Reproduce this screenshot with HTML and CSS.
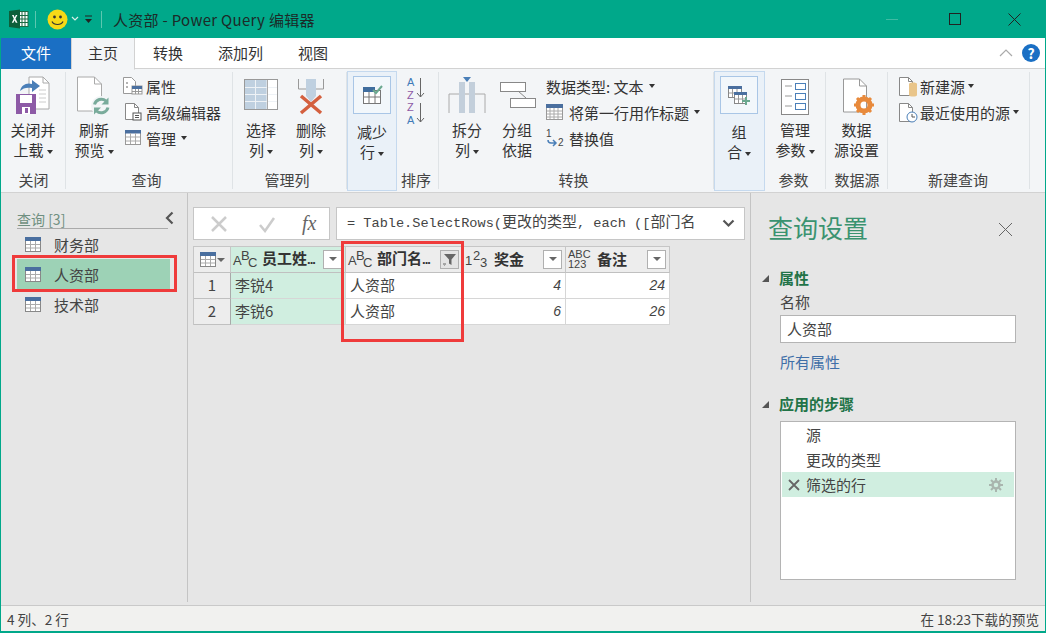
FILE: index.html
```html
<!DOCTYPE html>
<html lang="zh-CN">
  <head>
    <meta charset="UTF-8" />
    <title>人资部 - Power Query 编辑器</title>
    <link rel="stylesheet" href="styles.css">
  </head>
  <body>
    <div class="window">
      <header class="titlebar">
        <svg class="tb-excel" width="20" height="20" viewBox="0 0 20 20">
          <rect x="9" y="2.5" width="10" height="15" fill="#fff" stroke="#1d6b45"/>
          <path d="M13 3v14M16 3v14M10 6.5h9M10 10h9M10 13.5h9" stroke="#1d6b45" fill="none"/>
          <path d="M0 2l11-1.5v19L0 18z" fill="#0d5f3a"/>
          <path d="M3 6l1.7 0 1 2.4 1.1-2.4h1.6l-1.9 3.8 2 4H6.8l-1.2-2.6-1.2 2.6H2.8l2-4z" fill="#fff"/>
        </svg>
        <span class="tb-sep"></span>
        <svg class="tb-smile" width="21" height="21" viewBox="0 0 21 21">
          <circle cx="10.5" cy="10.5" r="10" fill="#f7d917"/>
          <circle cx="7.5" cy="8" r="1.4" fill="#333"/>
          <circle cx="13.5" cy="8" r="1.4" fill="#333"/>
          <path d="M5 12.5c2 4 9 4 11 0" fill="none" stroke="#333" stroke-width="1.2"/>
        </svg>
        <svg class="tb-small" width="8" height="6" viewBox="0 0 8 6"><path d="M1 1l3 3 3-3" fill="none" stroke="#d8efe8" stroke-width="1.2"/></svg>
        <svg class="tb-qat" width="9" height="9" viewBox="0 0 9 9"><path d="M1 1h7" stroke="#222"/><path d="M1 4h7L4.500 8z" fill="#222"/></svg>
        <span class="tb-sep tb-sep-last"></span>
        <span class="tb-title">人资部 - Power Query 编辑器</span>
        <div class="win-btns">
          <span class="win-min"></span>
          <span class="win-max"></span>
          <svg width="13" height="13" viewBox="0 0 13 13"><path d="M.5.5l12 12M12.500.5l-12 12" stroke="#222" fill="none"/></svg>
        </div>
      </header>

      <nav class="tabs">
        <span class="tab tab-file">文件</span>
        <span class="tab tab-home">主页</span>
        <span class="tab tab-convert">转换</span>
        <span class="tab tab-addcol">添加列</span>
        <span class="tab tab-view">视图</span>
        <div class="tabs-right">
          <svg width="14" height="8" viewBox="0 0 14 8"><path d="M1 7l6-6 6 6" fill="none" stroke="#aaa" stroke-width="1.2"/></svg>
          <span class="help">?</span>
        </div>
      </nav>

      <section class="ribbon">
        <div class="group g-close">
          <div class="group-body">
            <div class="big">
              <svg width="36" height="40" viewBox="0 0 36 40">
                <path d="M14 1h14l6 6v26H14z" fill="#fff" stroke="#aaa"/>
                <path d="M28 1v6h6" fill="none" stroke="#aaa"/>
                <path d="M24 14h7M24 18h7M24 22h7M24 26h7" stroke="#ccc"/>
                <path d="M5 15c1-6 7-9 12-7V4l8 6-8 6v-4c-5-1-9 0-12 3z" fill="#4a7fb8"/>
                <path d="M1 18h20v20H1z" fill="#8d5aa6"/>
                <rect x="5" y="19" width="12" height="8" fill="#fff"/>
                <rect x="7" y="31" width="8" height="7" fill="#fff"/>
                <rect x="10" y="32" width="3" height="5" fill="#8d5aa6"/>
              </svg>
              <span class="big-text">关闭并<br>上载<i class="caret"></i></span>
            </div>
          </div>
          <div class="group-label">关闭</div>
        </div>

        <div class="group g-query">
          <div class="group-body">
            <div class="big">
              <svg width="36" height="40" viewBox="0 0 36 40">
                <path d="M1.500 1h17l7 7v27h-24z" fill="#fff" stroke="#aaa"/>
                <path d="M18.500 1v7h7" fill="none" stroke="#aaa"/>
                <circle cx="25" cy="30" r="10" fill="#f3f5f7"/>
                <path d="M18.500 28.500a7 7 0 0 1 11.500-3.500" fill="none" stroke="#79ab9b" stroke-width="3"/>
                <path d="M32.500 21.500v7h-7z" fill="#79ab9b"/>
                <path d="M32 31.500a7 7 0 0 1-11.500 3.500" fill="none" stroke="#79ab9b" stroke-width="3"/>
                <path d="M18 38.500v-7h7z" fill="#79ab9b"/>
              </svg>
              <span class="big-text">刷新<br>预览<i class="caret"></i></span>
            </div>
            <div class="small-col">
              <div class="small">
                <svg width="20" height="18" viewBox="0 0 20 18">
                  <path d="M.5.500h8l4 4v12H.5z" fill="#fff" stroke="#999"/>
                  <path d="M3 6h2M3 10h2" stroke="#666"/>
                  <rect x="9" y="9" width="10" height="8" fill="#fff" stroke="#999"/>
                  <rect x="9" y="9" width="10" height="3" fill="#4a6f9f"/>
                  <path d="M12.500 12v5M15.500 12v5M9 14.500h10" stroke="#999"/>
                </svg>
                <span>属性</span>
              </div>
              <div class="small">
                <svg width="20" height="18" viewBox="0 0 20 18">
                  <path d="M2.500.500h9l4 4v12h-13z" fill="#fff" stroke="#888"/>
                  <path d="M11.500.5v4h4" fill="none" stroke="#888"/>
                  <rect x="10" y="10" width="8" height="7" fill="#fff" stroke="#555"/>
                  <path d="M12 12.500h4M12 14.500h4" stroke="#555"/>
                </svg>
                <span>高级编辑器</span>
              </div>
              <div class="small">
                <svg width="20" height="18" viewBox="0 0 20 18">
                  <rect x="2.500" y="1.500" width="15" height="14" fill="#fff" stroke="#999"/>
                  <rect x="2" y="1" width="16" height="3.500" fill="#4a6f9f"/>
                  <path d="M7.500 4v11M12.500 4v11M3 8h14M3 12h14" stroke="#aaa"/>
                </svg>
                <span>管理</span><i class="caret caret-wide"></i>
              </div>
            </div>
          </div>
          <div class="group-label">查询</div>
        </div>

        <div class="group g-cols">
          <div class="group-body">
            <div class="big">
              <svg width="36" height="40" viewBox="0 0 36 40">
                <rect x="1.500" y="3.500" width="33" height="30" fill="#fff" stroke="#999"/>
                <rect x="2" y="4" width="22" height="29" fill="#bfd0e0"/>
                <path d="M12.500 4v29M24 4v29M2 11.500h32M2 18.500h32M2 25.500h32" stroke="#eef2f6"/>
                <path d="M24.500 4v29" stroke="#aaa"/>
              </svg>
              <span class="big-text">选择<br>列<i class="caret"></i></span>
            </div>
            <div class="big">
              <svg width="36" height="40" viewBox="0 0 36 40">
                <path d="M5.500 3v10h25V3" fill="none" stroke="#999"/>
                <path d="M13 3h10v17l-5 6-5-6z" fill="#bfd0e0"/>
                <path d="M8 20l20 17M28 20L8 37" stroke="#d4603f" stroke-width="3.500"/>
              </svg>
              <span class="big-text">删除<br>列<i class="caret"></i></span>
            </div>
          </div>
          <div class="group-label">管理列</div>
        </div>

        <div class="group g-reduce active">
          <div class="group-body">
            <div class="big">
              <span class="icon-box">
                <svg width="22" height="22" viewBox="0 0 22 22">
                  <rect x="2.500" y="6.500" width="17" height="13" fill="#fff" stroke="#777"/>
                  <rect x="2" y="3" width="12" height="5" fill="#3f6d9e"/>
                  <path d="M8 8v11M14 8v11M3 13h16" stroke="#777"/>
                  <path d="M12 6l3 3 6-7" fill="none" stroke="#6aa88f" stroke-width="2"/>
                </svg>
              </span>
              <span class="big-text">减少<br>行<i class="caret"></i></span>
            </div>
          </div>
        </div>

        <div class="group g-sort">
          <div class="group-body">
            <div class="sort-col">
              <svg width="18" height="25" viewBox="0 0 18 25">
                <text class="sort-a" x="0" y="10">A</text>
                <text class="sort-z" x="0" y="22.500">Z</text>
                <path d="M13.500 2v19M10 17l3.500 4 3.500-4" fill="none" stroke="#666"/>
              </svg>
              <svg width="18" height="25" viewBox="0 0 18 25">
                <text class="sort-z" x="0" y="10">Z</text>
                <text class="sort-a" x="0" y="22.500">A</text>
                <path d="M13.500 2v19M10 17l3.500 4 3.500-4" fill="none" stroke="#666"/>
              </svg>
            </div>
          </div>
          <div class="group-label">排序</div>
        </div>

        <div class="group g-transform">
          <div class="group-body">
            <div class="big">
              <svg width="38" height="40" viewBox="0 0 38 40">
                <path d="M1 37V18h36v19" fill="none" stroke="#aaa"/>
                <rect x="11" y="6" width="6" height="31" fill="#c3cfdb"/>
                <rect x="21" y="6" width="6" height="31" fill="#c3cfdb"/>
                <path d="M15 1h8l-4 5z" fill="#4a7fb8"/>
              </svg>
              <span class="big-text">拆分<br>列<i class="caret"></i></span>
            </div>
            <div class="big">
              <svg width="38" height="40" viewBox="0 0 38 40">
                <rect x="2.500" y="6.500" width="25" height="9" fill="#fff" stroke="#888"/>
                <rect x="12.500" y="22.500" width="25" height="9" fill="#fff" stroke="#888"/>
                <path d="M20 15l8 7" stroke="#888"/>
              </svg>
              <span class="big-text">分组<br>依据</span>
            </div>
            <div class="small-col">
              <div class="small small-plain"><span>数据类型: 文本</span><i class="caret caret-wide"></i></div>
              <div class="small">
                <svg width="18" height="18" viewBox="0 0 18 18">
                  <rect x=".5" y="1.500" width="16" height="15" fill="#fff" stroke="#999"/>
                  <rect x="0" y="1" width="17" height="4" fill="#4a6f9f"/>
                  <path d="M4 5v11M8 5v11M12 5v11M1 8h15M1 11h15M1 14h15" stroke="#aaa"/>
                </svg>
                <span>将第一行用作标题</span><i class="caret caret-wide"></i>
              </div>
              <div class="small">
                <svg width="18" height="18" viewBox="0 0 18 18">
                  <text class="rep-num" x="0" y="8">1</text>
                  <text class="rep-num" x="12" y="17">2</text>
                  <path d="M2 11c0 2 1 3 3 3h4M7 11l3 3-3 3" fill="none" stroke="#4a7fb8" stroke-width="1.500"/>
                </svg>
                <span>替换值</span>
              </div>
            </div>
          </div>
          <div class="group-label">转换</div>
        </div>

        <div class="group g-combine active">
          <div class="group-body">
            <div class="big">
              <span class="icon-box">
                <svg width="22" height="22" viewBox="0 0 22 22">
                  <rect x=".5" y="2.500" width="13" height="11" fill="#fff" stroke="#888"/>
                  <rect x="0" y="2" width="14" height="3" fill="#4a6f9f"/>
                  <path d="M4.500 5v8M9 5v8M1 9h12" stroke="#999"/>
                  <rect x="6.500" y="8.500" width="12" height="11" fill="#fff" stroke="#888"/>
                  <rect x="6" y="8" width="13" height="3" fill="#4a6f9f"/>
                  <path d="M10.500 11v8M14.500 11v8M7 15h11" stroke="#999"/>
                  <path d="M14 17h8M18 13v8" stroke="#6aa88f" stroke-width="2"/>
                </svg>
              </span>
              <span class="big-text">组<br>合<i class="caret"></i></span>
            </div>
          </div>
        </div>

        <div class="group g-params">
          <div class="group-body">
            <div class="big">
              <svg width="30" height="40" viewBox="0 0 30 40">
                <rect x="1.500" y="3.500" width="27" height="35" fill="#fff" stroke="#888"/>
                <path d="M5 10h7M5 20h7M5 30h7" stroke="#999"/>
                <rect x="15.500" y="7.500" width="10" height="6" fill="#fff" stroke="#4a7fb8"/>
                <rect x="15.500" y="17.500" width="10" height="6" fill="#fff" stroke="#4a7fb8"/>
                <rect x="15.500" y="27.500" width="10" height="6" fill="#fff" stroke="#4a7fb8"/>
              </svg>
              <span class="big-text">管理<br>参数<i class="caret"></i></span>
            </div>
          </div>
          <div class="group-label">参数</div>
        </div>

        <div class="group g-source">
          <div class="group-body">
            <div class="big">
              <svg width="34" height="40" viewBox="0 0 34 40">
                <path d="M3.500 3h16l7 7v26h-23z" fill="#fff" stroke="#999"/>
                <path d="M19.500 3v7h7" fill="none" stroke="#999"/>
                <circle cx="24" cy="29" r="6" fill="none" stroke="#e88a3c" stroke-width="5"/>
                <path d="M24 19v3M24 36v3M14 29h3M31 29h3M17 22l2 2M29 34l2 2M31 22l-2 2M19 34l-2 2" stroke="#e88a3c" stroke-width="3"/>
              </svg>
              <span class="big-text">数据<br>源设置</span>
            </div>
          </div>
          <div class="group-label">数据源</div>
        </div>

        <div class="group g-new">
          <div class="group-body">
            <div class="small-col">
              <div class="small">
                <svg width="20" height="20" viewBox="0 0 20 20">
                  <path d="M.5.500h9l4 4v14H.5z" fill="#fff" stroke="#888"/>
                  <path d="M9.500.5v4h4" fill="none" stroke="#888"/>
                  <path d="M10 7c0-2 8-2 8 0v11c0 2-8 2-8 0z" fill="#e9c58a"/>
                </svg>
                <span>新建源</span><i class="caret caret-wide"></i>
              </div>
              <div class="small">
                <svg width="20" height="20" viewBox="0 0 20 20">
                  <path d="M.5.500h9l4 4v14H.5z" fill="#fff" stroke="#888"/>
                  <path d="M9.500.5v4h4" fill="none" stroke="#888"/>
                  <circle cx="13" cy="14" r="5" fill="#fff" stroke="#4a7fb8"/>
                  <path d="M13 11v3h3" fill="none" stroke="#555"/>
                </svg>
                <span>最近使用的源</span><i class="caret caret-wide"></i>
              </div>
            </div>
          </div>
          <div class="group-label">新建查询</div>
        </div>
      </section>

      <main class="main">
        <aside class="queries">
          <div class="queries-head">
            <span class="queries-title">查询 [3]</span>
            <svg class="collapse" width="9" height="14" viewBox="0 0 9 14"><path d="M7.500 1.500L2 7l5.500 5.500" fill="none" stroke="#555" stroke-width="2.200"/></svg>
          </div>
          <ul class="query-list">
            <li class="query"><svg class="tbl-icon" width="16" height="15" viewBox="0 0 16 15"><use href="#tbl"/></svg>财务部</li>
            <li class="query selected"><svg class="tbl-icon" width="16" height="15" viewBox="0 0 16 15"><use href="#tbl"/></svg>人资部</li>
            <li class="query"><svg class="tbl-icon" width="16" height="15" viewBox="0 0 16 15"><use href="#tbl"/></svg>技术部</li>
          </ul>
        </aside>

        <section class="center">
          <div class="formula-bar">
            <div class="fx-box">
              <svg width="18" height="18" viewBox="0 0 18 18"><path d="M2 2l14 14M16 2L2 16" stroke="#ccc" stroke-width="2.500"/></svg>
              <svg width="18" height="18" viewBox="0 0 18 18"><path d="M2 10l5 6L16 3" fill="none" stroke="#ccc" stroke-width="2.500"/></svg>
              <span class="fx">fx</span>
            </div>
            <div class="formula">
              <span class="formula-text">= Table.SelectRows(<span class="cjk">更改的类型</span>, each ([<span class="cjk">部门名</span></span>
              <svg width="13" height="9" viewBox="0 0 13 9"><path d="M1.500 1.500L6.500 6.500l5-5" fill="none" stroke="#555" stroke-width="2.200"/></svg>
            </div>
          </div>

          <div class="grid">
            <div class="cell head corner">
              <svg width="16" height="15" viewBox="0 0 16 15"><use href="#tbl"/></svg>
              <i class="caret caret-grey"></i>
            </div>
            <div class="cell head key">
              <span class="type"><b>A</b><sup>B</sup><sub>C</sub></span>
              <span class="head-name">员工姓<span class="dots">...</span></span>
              <span class="filter"><i class="caret caret-grey"></i></span>
            </div>
            <div class="cell head">
              <span class="type"><b>A</b><sup>B</sup><sub>C</sub></span>
              <span class="head-name">部门名<span class="dots">...</span></span>
              <span class="filter filter-on">
                <svg width="13" height="13" viewBox="0 0 13 13"><path d="M1 1h12L8.500 6.500V12L6 10.500v-4z" fill="#666"/><path d="M0 11h3M1 13h1" stroke="#666"/></svg>
              </span>
            </div>
            <div class="cell head">
              <span class="type"><b>1</b><sup>2</sup><sub>3</sub></span>
              <span class="head-name">奖金</span>
              <span class="filter"><i class="caret caret-grey"></i></span>
            </div>
            <div class="cell head">
              <span class="type type-any">ABC<br>123</span>
              <span class="head-name">备注</span>
              <span class="filter"><i class="caret caret-grey"></i></span>
            </div>

            <div class="cell rownum">1</div>
            <div class="cell key">李锐4</div>
            <div class="cell">人资部</div>
            <div class="cell num">4</div>
            <div class="cell num">24</div>

            <div class="cell rownum">2</div>
            <div class="cell key">李锐6</div>
            <div class="cell">人资部</div>
            <div class="cell num">6</div>
            <div class="cell num">26</div>
          </div>
        </section>

        <aside class="settings">
          <div class="settings-head">
            <h1>查询设置</h1>
            <svg class="settings-close" width="15" height="15" viewBox="0 0 15 15"><path d="M1 1l13 13M14 1L1 14" stroke="#666" fill="none"/></svg>
          </div>
          <h2 class="sec"><i class="tri"></i>属性</h2>
          <div class="sec-body">
            <div class="field-label">名称</div>
            <div class="field">人资部</div>
            <div class="all-props">所有属性</div>
          </div>
          <h2 class="sec sec-steps"><i class="tri"></i>应用的步骤</h2>
          <div class="sec-body">
            <ul class="steps">
              <li class="step">源</li>
              <li class="step">更改的类型</li>
              <li class="step current">
                <svg class="step-x" width="12" height="12" viewBox="0 0 12 12"><path d="M1 1l10 10M11 1L1 11" stroke="#666" stroke-width="1.800"/></svg>
                筛选的行
                <svg class="step-gear" width="14" height="14" viewBox="0 0 14 14">
                  <circle cx="7" cy="7" r="3.500" fill="none" stroke="#a9b5ae" stroke-width="2.500"/>
                  <path d="M7 0v3M7 11v3M0 7h3M11 7h3M2 2l2 2M10 10l2 2M12 2l-2 2M4 10l-2 2" stroke="#a9b5ae" stroke-width="2"/>
                </svg>
              </li>
            </ul>
          </div>
        </aside>
      </main>

      <footer class="status">
        <span>4 列、2 行</span>
        <span>在 18:23下载的预览</span>
      </footer>

      <span class="mark mark-query"></span>
      <span class="mark mark-col"></span>
    </div>

    <svg class="defs" width="0" height="0">
      <defs>
        <g id="tbl">
          <rect x=".5" y=".5" width="15" height="14" fill="#fff" stroke="#888"/>
          <rect x="0" y="0" width="16" height="4" fill="#4a6f9f"/>
          <path d="M5.500 4v10M10.500 4v10M1 7.500h14M1 11h14" stroke="#aaa"/>
        </g>
      </defs>
    </svg>
  </body>
</html>
```

FILE: styles.css
```css
* {
  box-sizing: border-box;
}
body {
  margin: 0;
  font-family: "Noto Sans CJK SC", "Noto Sans", sans-serif;
  font-size: 15px;
  color: #333;
  overflow: hidden;
}
ul {
  list-style: none;
  margin: 0;
  padding: 0;
}
.defs {
  position: absolute;
}

.window {
  position: relative;
  width: 1046px;
  height: 633px;
  display: flex;
  flex-direction: column;
  border: 1px solid #00a88a;
  border-width: 0 1px 2px 1px;
  background: #e6e6e6;
}

/* title bar */
.titlebar {
  height: 38px;
  margin: 0 -1px;
  padding-left: 9px;
  background: #00a88a;
  display: flex;
  align-items: center;
}
.tb-sep {
  width: 1px;
  height: 17px;
  margin: 0 6px;
  background: #5cc7b0;
}
.tb-smile {
  margin-left: 5px;
}
.tb-small {
  margin-left: 3px;
}
.tb-qat {
  margin-left: 5px;
}
.tb-sep-last {
  margin-left: 8px;
}
.tb-title {
  font-size: 15px;
  letter-spacing: 0.3px;
  color: #1c2b28;
  margin-left: 5px;
}
.win-btns {
  margin-left: auto;
  padding-right: 25px;
  display: flex;
  align-items: center;
}
.win-min {
  width: 12px;
  height: 1px;
  background: #3fbba3;
  margin-right: 51px;
}
.win-max {
  width: 12px;
  height: 12px;
  border: 1px solid #222;
  margin-right: 47px;
}

/* tabs */
.tabs {
  height: 31px;
  background: #fff;
  border-bottom: 1px solid #d2d2d2;
  display: flex;
  position: relative;
}
.tab {
  height: 31px;
  line-height: 30px;
  color: #333;
}
.tab-file {
  width: 70px;
  height: 31px;
  text-align: center;
  background: #1a6fc4;
  color: #fff;
  line-height: 29px;
}
.tab-home {
  width: 64px;
  text-align: center;
  background: #f3f5f7;
  border: 1px solid #d2d2d2;
  border-width: 0 1px;
  border-bottom: 1px solid #f3f5f7;
  height: 32px;
}
.tab-convert {
  margin-left: 18px;
}
.tab-addcol {
  margin-left: 35px;
}
.tab-view {
  margin-left: 35px;
}
.tabs-right {
  margin-left: auto;
  padding-right: 5px;
  display: flex;
  align-items: center;
  gap: 9px;
}
.help {
  width: 18px;
  height: 18px;
  border-radius: 50%;
  background: #1a6fc4;
  color: #fff;
  font-size: 14px;
  font-weight: 700;
  line-height: 18px;
  text-align: center;
}

/* ribbon */
.ribbon {
  height: 124px;
  background: #f3f5f7;
  border-bottom: 1px solid #d2d2d2;
  display: flex;
  color: #333;
}
.group {
  display: flex;
  flex-direction: column;
  flex: none;
  padding: 3px 0 1px;
  position: relative;
}
.group::after {
  content: "";
  position: absolute;
  right: 0;
  top: 3px;
  bottom: 3px;
  width: 1px;
  background: #dfe3e6;
}
.group.active {
  background: #eaf1f8;
  border: 1px solid #c5d9ee;
  margin: 2px 0 1px;
  padding: 4px 0 0;
}
.group.active::after {
  display: none;
}
.group-body {
  flex: 1;
  display: flex;
}
.group-label {
  height: 23px;
  line-height: 24px;
  text-align: center;
  color: #444;
}
.g-close { width: 65px; }
.g-query { width: 167px; }
.g-query .group-body { padding-left: 3px; }
.g-query .group-label { padding-right: 6px; }
.g-cols { width: 114px; }
.g-cols .group-body { padding-left: 3px; }
.g-cols .group-label { padding-right: 6px; }
.g-reduce { width: 50px; }
.g-sort { width: 42px; }
.g-sort .group-label { padding-right: 4px; }
.g-transform { width: 275px; }
.g-transform .group-body { padding-left: 3px; }
.g-transform .group-label { padding-right: 6px; }
.g-combine { width: 51px; margin-left: 1px; }
.g-params { width: 61px; }
.g-params .group-label { padding-right: 4px; }
.g-source { width: 62px; }
.g-new { width: 142px; }
.g-new .group-body { padding-left: 7px; }
.g-new .group-label { padding-right: 2px; }

.big {
  width: 50px;
  display: flex;
  flex-direction: column;
  align-items: center;
  padding-top: 4px;
}
.g-close .big { width: 64px; }
.g-params .big { width: 60px; }
.g-source .big { width: 61px; }
.big svg {
  height: 40px;
  flex: none;
}
.big-text {
  margin-top: 4px;
  line-height: 20px;
  text-align: center;
  white-space: nowrap;
}
.icon-box {
  width: 38px;
  height: 38px;
  border: 1px solid #a9c6e6;
  background: #f2f7fb;
  display: flex;
  align-items: center;
  justify-content: center;
  margin-bottom: 4px;
}
.icon-box svg {
  height: 22px;
}
.g-reduce .big,
.g-combine .big {
  padding-top: 0;
  width: 48px;
}

.caret {
  display: inline-block;
  width: 0;
  height: 0;
  margin-left: 3px;
  vertical-align: 2px;
  border: 3px solid transparent;
  border-top: 4px solid #333;
  border-bottom: 0;
}
.caret-wide {
  margin-left: 2px;
}
.caret-grey {
  border-top-color: #666;
  border-width: 4px 4px 0;
  margin: 0;
}

.small-col {
  padding: 1px 0 0 4px;
  display: flex;
  flex-direction: column;
}
.small {
  height: 26px;
  display: flex;
  align-items: center;
  gap: 3px;
  white-space: nowrap;
}
.small svg {
  flex: none;
}
.g-transform .small {
  gap: 5px;
}
.g-transform .caret-wide {
  margin-left: 0;
}
.g-new .small {
  gap: 1px;
}
.g-new .small svg {
  margin-top: 1px;
}
.sort-col {
  display: flex;
  flex-direction: column;
  padding: 4px 0 0 10px;
}
.sort-col svg {
  overflow: visible;
}
.sort-a,
.sort-z {
  font-family: "Liberation Sans", sans-serif;
  font-size: 11px;
}
.sort-a { fill: #3f7ab8; }
.sort-z { fill: #8d5aa6; }
.rep-num {
  font-family: "Liberation Sans", sans-serif;
  font-size: 10px;
  fill: #444;
}

/* main area */
.main {
  flex: 1;
  display: flex;
  min-height: 0;
  border-bottom: 1px solid #c9c9c9;
}
.queries {
  width: 187px;
  flex: none;
  border-right: 1px solid #c4c4c4;
  padding: 17px 0 0 16px;
  margin-bottom: 3px;
}
.queries-head {
  width: 158px;
  height: 19px;
  position: relative;
}
.queries-title {
  display: block;
  width: 151px;
  height: 19px;
  line-height: 18px;
  font-size: 14px;
  color: #6f8f80;
  border-bottom: 1px solid #aaa;
}
.collapse {
  position: absolute;
  right: 1px;
  top: 1px;
}
.query {
  height: 30px;
  width: 153px;
  display: flex;
  align-items: center;
  padding-left: 8px;
  color: #444;
}
.tbl-icon {
  margin-right: 13px;
}
.query.selected {
  background: #9dd2b6;
}

.center {
  flex: 1;
  padding: 14px 5px 0 5px;
  border-right: 1px solid #c4c4c4;
  margin-bottom: 3px;
  min-width: 0;
}
.formula-bar {
  display: flex;
  gap: 6px;
  height: 33px;
}
.fx-box {
  width: 137px;
  background: #fff;
  border: 1px solid #c6c6c6;
  display: flex;
  align-items: center;
  gap: 30px;
  padding-left: 16px;
}
.fx {
  font-family: "Liberation Serif", serif;
  font-style: italic;
  font-size: 20px;
  color: #666;
  margin-left: -4px;
}
.formula {
  flex: 1;
  background: #fff;
  border: 1px solid #c6c6c6;
  display: flex;
  align-items: center;
  justify-content: space-between;
  padding: 0 9px 0 10px;
}
.formula-text {
  font-family: "Liberation Mono", monospace;
  font-size: 13.6px;
  line-height: 20px;
  margin-bottom: 3px;
  color: #444;
  white-space: nowrap;
}
.cjk {
  font-family: "Noto Sans CJK SC", sans-serif;
  font-size: 15px;
}

.grid {
  margin-top: 6px;
  display: grid;
  grid-template-columns: 37px 115px 117px 103px 104px;
  grid-template-rows: 26px 26px 26px;
  width: 477px;
  border-top: 1px solid #c6c6c6;
  border-left: 1px solid #c6c6c6;
}
.cell {
  background: #fff;
  border-right: 1px solid #d6d6d6;
  border-bottom: 1px solid #d6d6d6;
  padding: 0 4px 1px;
  display: flex;
  align-items: center;
  line-height: 20px;
  color: #444;
  white-space: nowrap;
  min-width: 0;
}
.cell.key {
  background: #d0eee0;
}
.head {
  background: #ededed;
  border-bottom-color: #c0c0c0;
  border-right-color: #c6c6c6;
  padding: 0 3px 1px 2px;
  font-weight: 700;
  color: #333;
}
.head.key {
  background: #d0eee0;
}
.corner {
  padding: 0 0 0 6px;
  gap: 1px;
  font-weight: 400;
}
.rownum {
  background: #ededed;
  justify-content: center;
  border-right-color: #a9a9a9;
  border-bottom-color: #c0c0c0;
}
.num {
  justify-content: flex-end;
  font-style: italic;
  font-family: "Liberation Sans", sans-serif;
  font-size: 14px;
  padding-right: 4px;
}
.type {
  width: 24px;
  flex: none;
  font-weight: 400;
  font-size: 14px;
  font-family: "Liberation Sans", sans-serif;
  line-height: 14px;
  color: #444;
  position: relative;
  height: 20px;
}
.type b {
  font-weight: 400;
  font-size: 13px;
  position: absolute;
  left: 0;
  top: 5px;
}
.type sup,
.type sub {
  position: absolute;
  font-size: 13px;
  line-height: 14px;
}
.type sup {
  left: 8px;
  top: 0;
}
.type sub {
  left: 15px;
  top: 7px;
}
.type-any {
  font-size: 11px;
  line-height: 10px;
  height: 20px;
}
.head-name {
  flex: 1;
  padding-left: 5px;
  overflow: hidden;
}
.dots {
  font-family: "Liberation Sans", sans-serif;
  font-size: 13px;
  letter-spacing: -1px;
}
.filter {
  width: 19px;
  height: 19px;
  flex: none;
  background: #fff;
  border: 1px solid #b0b0b0;
  display: flex;
  align-items: center;
  justify-content: center;
}
.filter-on {
  background: #e4e4e4;
}

.settings {
  width: 294px;
  flex: none;
  padding: 0 0 0 17px;
}
.settings-head {
  height: 72px;
  display: flex;
  align-items: center;
  justify-content: space-between;
  padding: 0 32px 4px 0;
}
.settings-close {
  margin-top: 4px;
}
.settings-head h1 {
  margin: 0;
  font-size: 25px;
  font-weight: 400;
  color: #3a9370;
}
.sec {
  margin: 0 0 0 -6px;
  font-size: 15px;
  font-weight: 700;
  color: #217346;
  height: 26px;
  line-height: 26px;
  display: flex;
  align-items: center;
}
.sec-steps {
  margin-top: 17px;
}
.tri {
  width: 0;
  height: 0;
  margin-right: 10px;
  border-style: solid;
  border-width: 0 0 7px 7px;
  border-color: transparent transparent #555 transparent;
}
.sec-body {
  padding-left: 12px;
  width: 248px;
}
.field-label {
  height: 24px;
  line-height: 22px;
  color: #444;
}
.field {
  height: 28px;
  line-height: 26px;
  padding-left: 6px;
  background: #fff;
  border: 1px solid #b4b4b4;
  color: #444;
}
.all-props {
  margin-top: 7px;
  height: 24px;
  line-height: 24px;
  color: #3f6fa8;
}
.steps {
  height: 159px;
  margin-top: 4px;
  padding: 0 1px;
  background: #fff;
  border: 1px solid #b4b4b4;
}
.step {
  height: 25px;
  line-height: 25px;
  padding-left: 24px;
  color: #444;
  position: relative;
}
.step.current {
  background: #d0eee0;
}
.step-x {
  position: absolute;
  left: 6px;
  top: 7px;
}
.step-gear {
  position: absolute;
  right: 11px;
  top: 6px;
}

/* status bar */
.status {
  height: 25px;
  background: #f1f1ef;
  display: flex;
  justify-content: space-between;
  align-items: center;
  padding: 0 6px;
  font-size: 13.6px;
  color: #444;
}

/* red call-outs drawn on top of the screenshot */
.mark {
  position: absolute;
  border: 3px solid #ef3b3b;
  pointer-events: none;
}
.mark-query {
  left: 11px;
  top: 255px;
  width: 165px;
  height: 37px;
}
.mark-col {
  left: 340px;
  top: 241px;
  width: 123px;
  height: 101px;
}
```
